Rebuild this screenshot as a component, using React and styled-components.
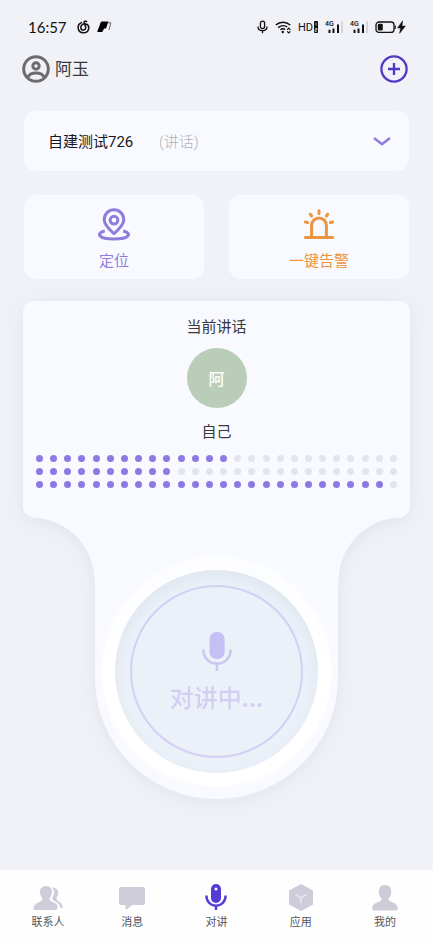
import React from "react";
import styled, { createGlobalStyle } from "styled-components";

const colors = {
  page: "#f1f2f7",
  card: "#f9faff",
  purple: "#8d7edb",
  orange: "#ec9440",
  accent: "#5238c6",
  muted: "#cfccda",
  pale: "#d2cff2",
};

const GlobalStyle = createGlobalStyle`
  * { box-sizing: border-box; }
  body {
    margin: 0;
    background: ${colors.page};
    font-family: Roboto, "Noto Sans CJK SC", sans-serif;
    color: #37373d;
  }
  button, select {
    font: inherit;
    color: inherit;
    border: 0;
    padding: 0;
    margin: 0;
    background: none;
    cursor: pointer;
  }
  svg { display: block; flex: none; }
`;

const Page = styled.div`
  min-height: 100vh;
  display: flex;
  flex-direction: column;
`;

const StatusBar = styled.div`
  display: flex;
  align-items: center;
  justify-content: space-between;
  height: 54px;
  padding: 0 27px 0 28px;
  color: #111;
`;

const StatusGroup = styled.div`
  display: flex;
  align-items: center;
  gap: ${(p) => p.$gap}px;
`;

const Clock = styled.time`
  font-family: Lato, sans-serif;
  font-size: 15px;
  line-height: 18px;
  margin: 0 3px 1px 0;
`;

const Header = styled.header`
  display: flex;
  align-items: center;
  justify-content: space-between;
  height: 30px;
  padding: 0 25px 0 22px;
`;

const Profile = styled.button`
  display: flex;
  align-items: center;
  gap: 5px;
  font-size: 17px;
  line-height: 24px;
`;

const IconButton = styled.button`
  display: block;
`;

const Main = styled.main`
  display: flex;
  flex-direction: column;
  padding: 27px 24px 0;
`;

const GroupCard = styled.label`
  display: flex;
  align-items: center;
  height: 60px;
  padding: 2px 17px 0 24px;
  border-radius: 12px;
  background: ${colors.card};
`;

const GroupSelect = styled.select`
  appearance: none;
  font-size: 15px;
  line-height: 22px;
  color: #17171c;
`;

const GroupMode = styled.span`
  flex: 1;
  margin-left: 25px;
  font-size: 15px;
  font-weight: 300;
  line-height: 22px;
  color: #b0b0b8;
`;

const Actions = styled.div`
  display: grid;
  grid-template-columns: 1fr 1fr;
  gap: 25px;
  margin-top: 24px;
`;

const ActionButton = styled.button`
  display: flex;
  flex-direction: column;
  align-items: center;
  gap: 8px;
  height: 84px;
  padding-top: 13px;
  border-radius: 12px;
  background: ${colors.card};
  color: ${(p) => p.$color};
  font-size: 15px;
  line-height: 22px;
`;

const TalkArea = styled.section`
  margin: 22px -1px 0;
  filter: drop-shadow(0 3px 10px rgba(40, 40, 60, 0.07));
`;

const SpeakerPanel = styled.div`
  display: flex;
  flex-direction: column;
  align-items: center;
  height: 216px;
  padding: 15px 13px 0;
  border-radius: 10px;
  background: ${colors.card};
`;

const SpeakerText = styled.p`
  margin: 0;
  font-size: 15px;
  line-height: 22px;
`;

const Avatar = styled.div`
  display: flex;
  align-items: center;
  justify-content: center;
  width: 60px;
  height: 60px;
  margin: 10px 0 13px;
  border-radius: 50%;
  background: #bacdb8;
  color: #fff;
  font-size: 16px;
  font-weight: 500;
`;

const Meter = styled.div`
  display: flex;
  flex-direction: column;
  align-self: stretch;
  gap: 6px;
  margin-top: 12px;
`;

const MeterRow = styled.div`
  display: flex;
  justify-content: space-between;
`;

const Dot = styled.i`
  width: 7px;
  height: 7px;
  border-radius: 50%;
  background: ${(p) => (p.$on ? "#8b7ae2" : "#e4e4ec")};
`;

const Neck = styled.div`
  display: flex;
  justify-content: center;
`;

const Fillet = styled.div`
  width: 64px;
  height: 64px;
  background: radial-gradient(
    circle at ${(p) => (p.$side === "left" ? "0" : "100%")} 100%,
    transparent 63px,
    ${colors.card} 64px
  );
`;

const Stem = styled.div`
  display: flex;
  justify-content: center;
  width: 243px;
  padding: 40px 0 13px;
  border-radius: 0 0 122px 122px;
  background: ${colors.card};
`;

const TalkRing = styled.div`
  padding: 13px;
  border-radius: 50%;
  background: linear-gradient(#fcfdff, #ffffff 50%);
  box-shadow: 0 0 4px #ffffff;
`;

const TalkButton = styled.button`
  display: block;
  padding: 15px;
  border-radius: 50%;
  background: #ebf0f9;
  box-shadow: inset 0 6px 14px #dfe6ee;
  color: ${colors.pale};
`;

const TalkFace = styled.span`
  display: flex;
  flex-direction: column;
  align-items: center;
  gap: 7px;
  width: 173px;
  height: 173px;
  padding-top: 45px;
  border: 2px solid #d3d1f3;
  border-radius: 50%;
  font-family: "Noto Sans CJK SC", sans-serif;
  font-size: 24px;
  font-weight: 500;
  line-height: 36px;
`;

const TabBar = styled.nav`
  display: grid;
  grid-template-columns: repeat(5, 1fr);
  height: 69px;
  margin-top: auto;
  padding: 0 6px;
  background: #fefefe;
`;

const Tab = styled.a`
  display: flex;
  flex-direction: column;
  align-items: center;
  gap: 4px;
  padding-top: 13px;
  color: #55555c;
  font-size: 11px;
  line-height: 16px;
  text-decoration: none;
`;

const SwirlIcon = () => (
  <svg width="13" height="14" viewBox="0 0 13 14" fill="none" stroke="#111" strokeWidth="1.5" strokeLinecap="round">
    <path d="M4.4 2.6C-.6 4.6.2 12.8 6.4 12.8 12.6 12.8 13.4 5.2 8.8 4 6 3.4 3.8 5 3.8 7.4 3.8 9 5 10 6.4 10 8.2 10 9 8.6 8.6 7L7.2 2.6C7 1.2 8.2.8 9.6 1.5" />
  </svg>
);

const FlagIcon = () => (
  <svg width="16" height="12" viewBox="0 0 16 12">
    <path d="M4.5.6H11.4L9 7.4 7.2 7.4 5.2 11H.2C1 8 2.6 5.2 3.2 2.2Z" fill="#000" />
    <path d="M10.5 1.8H13.8L12 9" fill="none" stroke="#555" strokeWidth=".9" />
  </svg>
);

const SmallMicIcon = () => (
  <svg width="11" height="14" viewBox="0 0 11 14" fill="none" stroke="#111" strokeWidth="1.3">
    <rect x="3.4" y="1.2" width="4.2" height="7.4" rx="2.1" />
    <path d="M1 6.4C1 12 10 12 10 6.4M5.5 10.6V13.2" />
  </svg>
);

const WifiIcon = () => (
  <svg width="16" height="14" viewBox="0 0 16 14" fill="none" stroke="#111" strokeWidth="1.5">
    <path d="M.8 5A10.5 10.5 0 0 1 15.2 5M3.2 7.6A7 7 0 0 1 12.2 7M5.4 9.8A4 4 0 0 1 10.2 9.4" />
    <circle cx="7.8" cy="12" r="1.2" fill="#111" stroke="none" />
    <path d="M12.2 9.8 13.8 8.2 15.4 9.8M12.2 11.4 13.8 13 15.4 11.4" strokeWidth="1.2" />
  </svg>
);

const HdIcon = () => (
  <svg width="20" height="14" viewBox="0 0 20 14">
    <text x="0" y="11" fontFamily="Roboto" fontSize="11" fill="#111">HD</text>
    <rect x="16" y="1" width="4" height="12" rx="1" fill="#111" />
    <path d="M18 2.8v2.6M17 8.6h2v1.2h-2v1.6h2" fill="none" stroke="#f1f2f7" strokeWidth=".7" />
  </svg>
);

const SignalIcon = () => (
  <svg width="18" height="14" viewBox="0 0 18 14">
    <text x="0" y="6" fontFamily="Roboto" fontSize="7" fontWeight="500" fill="#111">4G</text>
    <path d="M4.5 13V9.8M8.5 13V8.6M13 13V4.6" stroke="#111" strokeWidth="2" />
    <path d="M17 13V1" stroke="#cfcfd4" strokeWidth="1.6" />
  </svg>
);

const BatteryIcon = () => (
  <svg width="31" height="14" viewBox="0 0 31 14">
    <rect x="1" y="2" width="18" height="10.4" rx="3" fill="none" stroke="#111" strokeWidth="1.3" />
    <rect x="2.8" y="3.8" width="5" height="6.8" rx="1.4" fill="#111" />
    <path d="M20.2 5.4v3.6" stroke="#111" strokeWidth="1.2" />
    <path d="M27.6.8 22.6 8h3l-1 5.4 5.8-7.4h-3.4Z" fill="#111" stroke="#111" strokeWidth=".5" />
  </svg>
);

const UserIcon = () => (
  <svg width="28" height="28" viewBox="0 0 28 28" fill="none" stroke="#6b6b70" strokeWidth="3">
    <circle cx="14" cy="14" r="12.3" />
    <circle cx="14" cy="11" r="3.2" />
    <path d="M5.8 22.4C8.2 16.6 19.8 16.6 22.2 22.4" />
  </svg>
);

const PlusIcon = () => (
  <svg width="28" height="28" viewBox="0 0 28 28" fill="none" stroke={colors.accent} strokeWidth="2.3">
    <circle cx="14" cy="14" r="12.6" />
    <path d="M8 14H20M14 8V20" />
  </svg>
);

const ChevronIcon = () => (
  <svg width="20" height="12" viewBox="0 0 20 12" fill="none" stroke={colors.purple} strokeWidth="2.6">
    <path d="M2 2 10 8.2 18 2" />
  </svg>
);

const LocationIcon = () => (
  <svg width="34" height="34" viewBox="0 0 34 34" fill="none" stroke={colors.purple} strokeWidth="3">
    <path d="M17 25.6C13 22 7.2 17.5 7.2 11.6A9.8 9.8 0 0 1 26.8 11.6C26.8 17.5 21 22 17 25.6Z" strokeLinejoin="round" />
    <circle cx="17" cy="12.2" r="3.9" />
    <path d="M7.8 23C-1 25 .6 31 17 31S35 25 26.2 23" />
  </svg>
);

const AlarmIcon = () => (
  <svg width="34" height="34" viewBox="0 0 34 34" fill="none" stroke={colors.orange} strokeWidth="3" strokeLinecap="round">
    <path d="M9.6 29V17.4A7.4 7.4 0 0 1 24.4 17.4V29M3.4 29.6H30.6" />
    <path d="M17 2.8V5.4M8.2 6.2 9.6 8M25.8 6.2 24.4 8M3.4 14 5.6 14.5M30.6 14 28.4 14.5" />
  </svg>
);

const TalkMicIcon = () => (
  <svg width="32" height="40" viewBox="0 0 32 40">
    <rect x="8.6" y="0" width="15" height="27" rx="7" fill="#c4c0f4" />
    <path d="M2.4 17.4C2.4 36.4 29.6 36.4 29.6 17.4M16 32V39" fill="none" stroke="#cbc8f2" strokeWidth="2.6" />
  </svg>
);

const ContactsIcon = () => (
  <svg width="30" height="28" viewBox="0 0 30 28" fill={colors.muted}>
    <path d="M13 3C17 3 19.4 6 19 9.6 18.6 12 17.6 14 16.4 15.4 16 18.8 22.4 18.4 24.4 22.6Q25.2 27 22 27H3Q.2 27 .6 24.4C1.6 19.4 9.8 18.8 9.6 15.4 8 13.8 7.2 12 6.8 9.6 6.6 6 9 3 13 3Z" />
    <path d="M19 4.4C25.6 4.6 26.4 10 24.2 13.4 22.8 16 23.6 17 26 18.4 28.4 20 29.6 22 29.6 25H27.4C27 21.6 25 20 22.4 18.6 19.2 17 18.8 15.8 20.2 13 21.8 10.4 21.4 6.6 19 4.4Z" />
  </svg>
);

const MessageIcon = () => (
  <svg width="28" height="28" viewBox="0 0 28 28" fill={colors.muted}>
    <path d="M3 4H25Q27 4 27 6V20Q27 22 25 22H14L8.6 26.6Q7.4 27 7.6 25V22H3Q1 22 1 20V6Q1 4 3 4Z" />
  </svg>
);

const TabMicIcon = () => (
  <svg width="28" height="28" viewBox="0 0 28 28">
    <rect x="9" y="1" width="10" height="19" rx="5" fill="#563bd5" />
    <circle cx="14" cy="6" r="1.5" fill="#fff" />
    <path d="M4.4 12.5C4.4 26.2 23.6 26.2 23.6 12.5M14 23V27" fill="none" stroke="#563bd5" strokeWidth="2.4" />
  </svg>
);

const AppsIcon = () => (
  <svg width="28" height="28" viewBox="0 0 28 28">
    <path d="M14 1 26 7.6V21.4L14 28 2 21.4V7.6Z" fill={colors.muted} />
    <path d="M8.6 11.6 14 15 19.4 11.6M14 15V20" fill="none" stroke="#e6e4ed" strokeWidth="1.8" />
  </svg>
);

const MeIcon = () => (
  <svg width="28" height="28" viewBox="0 0 28 28" fill={colors.muted}>
    <path d="M14 2C18.6 2 20.6 5 20.2 9.6 20 12.4 19 14.4 17.4 15.6 17 20 26.6 18.6 26.8 25.4Q26.8 27.4 25 27.4H3Q1.2 27.4 1.2 25.4C1.4 18.6 11 20 10.6 15.6 9 14.4 8 12.4 7.8 9.6 7.4 5 9.4 2 14 2Z" />
  </svg>
);

const METER_COLUMNS = 26;
const meterLevels = [14, 10, 25];

const tabs = [
  { id: "contacts", label: "联系人", Icon: ContactsIcon },
  { id: "messages", label: "消息", Icon: MessageIcon },
  { id: "talk", label: "对讲", Icon: TabMicIcon },
  { id: "apps", label: "应用", Icon: AppsIcon },
  { id: "me", label: "我的", Icon: MeIcon },
];

export default function App() {
  return (
    <Page>
      <GlobalStyle />
      <StatusBar>
        <StatusGroup $gap={7}>
          <Clock>16:57</Clock>
          <SwirlIcon />
          <FlagIcon />
        </StatusGroup>
        <StatusGroup $gap={7}>
          <SmallMicIcon />
          <WifiIcon />
          <HdIcon />
          <SignalIcon />
          <SignalIcon />
          <BatteryIcon />
        </StatusGroup>
      </StatusBar>
      <Header>
        <Profile type="button">
          <UserIcon />
          阿玉
        </Profile>
        <IconButton type="button" aria-label="添加">
          <PlusIcon />
        </IconButton>
      </Header>
      <Main>
        <GroupCard>
          <GroupSelect aria-label="群组" defaultValue="726">
            <option value="726">自建测试726</option>
          </GroupSelect>
          <GroupMode>(讲话)</GroupMode>
          <ChevronIcon />
        </GroupCard>
        <Actions>
          <ActionButton type="button" $color={colors.purple}>
            <LocationIcon />
            定位
          </ActionButton>
          <ActionButton type="button" $color={colors.orange}>
            <AlarmIcon />
            一键告警
          </ActionButton>
        </Actions>
        <TalkArea>
          <SpeakerPanel>
            <SpeakerText>当前讲话</SpeakerText>
            <Avatar>阿</Avatar>
            <SpeakerText>自己</SpeakerText>
            <Meter>
              {meterLevels.map((level, row) => (
                <MeterRow key={row}>
                  {Array.from({ length: METER_COLUMNS }, (_, i) => (
                    <Dot key={i} $on={i < level} />
                  ))}
                </MeterRow>
              ))}
            </Meter>
          </SpeakerPanel>
          <Neck>
            <Fillet $side="left" />
            <Stem>
              <TalkRing>
                <TalkButton type="button">
                  <TalkFace>
                    <TalkMicIcon />
                    对讲中...
                  </TalkFace>
                </TalkButton>
              </TalkRing>
            </Stem>
            <Fillet $side="right" />
          </Neck>
        </TalkArea>
      </Main>
      <TabBar>
        {tabs.map(({ id, label, Icon }) => (
          <Tab key={id} href={`#${id}`} aria-current={id === "talk" ? "page" : undefined}>
            <Icon />
            {label}
          </Tab>
        ))}
      </TabBar>
    </Page>
  );
}
